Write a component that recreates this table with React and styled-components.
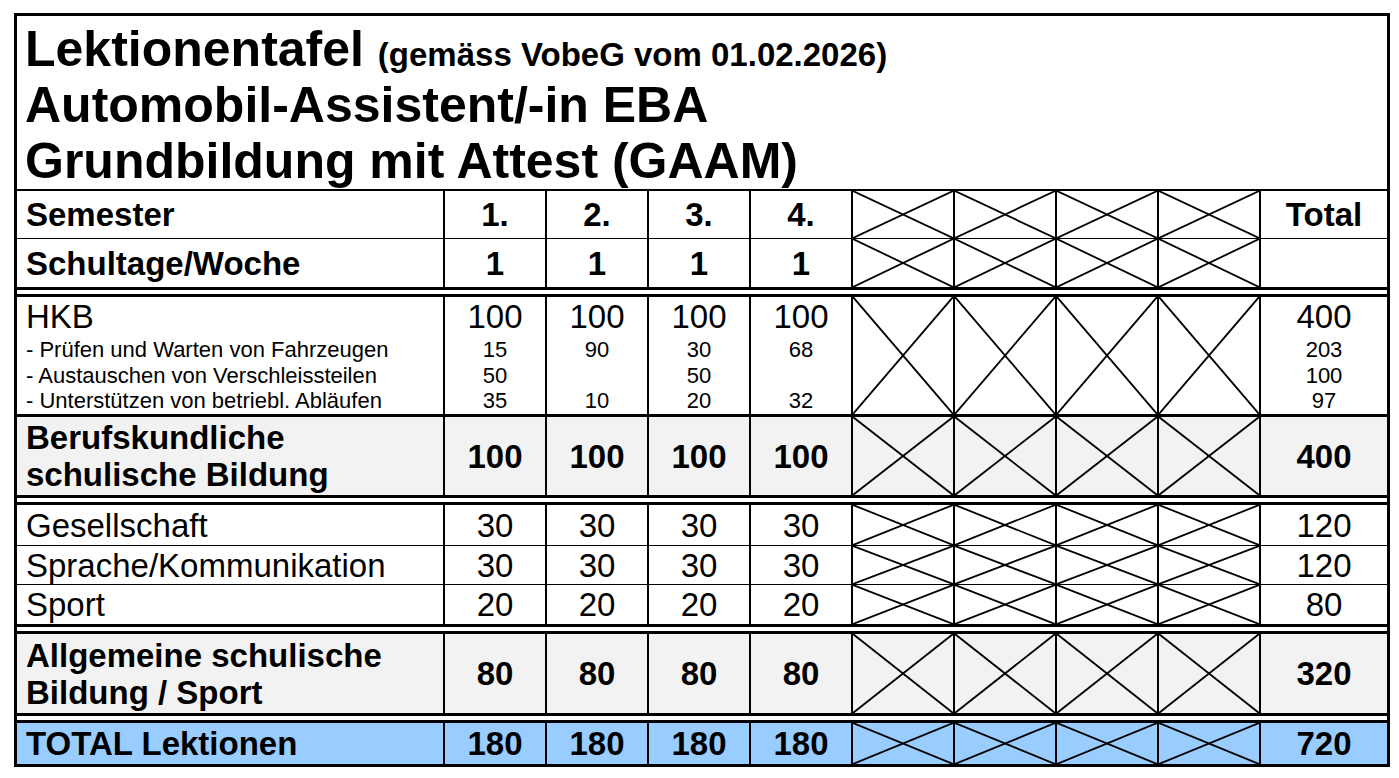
import React from "react";
import styled, { createGlobalStyle } from "styled-components";

const GlobalStyle = createGlobalStyle`
  html, body {
    margin: 0;
    padding: 0;
    background: #ffffff;
  }
  body {
    font-family: "Liberation Sans", Arial, sans-serif;
    color: #000;
  }
  * {
    box-sizing: border-box;
  }
`;

const Sheet = styled.div`
  margin: 13px 0 0 14px;
  width: 1376px;
  border: 3px solid #000;
`;

const TitleBlock = styled.div`
  padding: 5px 0 0 8px;
  border-bottom: 2px solid #000;
`;

const TitleLine = styled.div`
  height: 56px;
  font-size: 50px;
  font-weight: 700;
  line-height: 56px;
  white-space: nowrap;
`;

const TitleNote = styled.span`
  font-size: 33px;
  line-height: 1;
`;

const Row = styled.div`
  display: grid;
  grid-template-columns: 426px repeat(8, 102px) 128px;
  height: ${(p) => p.$h}px;
  background: ${(p) => p.$bg || "#ffffff"};
  border-bottom: ${(p) => p.$rule || 0}px solid #000;
`;

const DoubleRule = styled.div`
  height: 10px;
  border-top: 3px solid #000;
  border-bottom: 3px solid #000;
`;

const Cell = styled.div`
  position: relative;
  display: flex;
  flex-direction: column;
  justify-content: ${(p) => (p.$top ? "flex-start" : "center")};
  align-items: center;
  border-left: 2px solid #000;
  font-size: 33px;
  font-weight: ${(p) => (p.$bold ? 700 : 400)};
  line-height: 37px;
  white-space: nowrap;
`;

const LabelCell = styled(Cell)`
  align-items: flex-start;
  border-left: 0;
  padding-left: 9px;
`;

const MainLine = styled.div`
  line-height: 40px;
`;

const SubLine = styled.div`
  font-size: 22px;
  line-height: 25.5px;
`;

const CrossSvg = styled.svg`
  position: absolute;
  inset: 0;
  width: 100%;
  height: 100%;
  display: block;
`;

const Cross = () => (
  <CrossSvg viewBox="0 0 100 100" preserveAspectRatio="none">
    <line x1="0" y1="0" x2="100" y2="100" stroke="#000" strokeWidth="1.8" vectorEffect="non-scaling-stroke" />
    <line x1="100" y1="0" x2="0" y2="100" stroke="#000" strokeWidth="1.8" vectorEffect="non-scaling-stroke" />
  </CrossSvg>
);

const Crosses = () =>
  [0, 1, 2, 3].map((i) => (
    <Cell key={i}>
      <Cross />
    </Cell>
  ));

const SimpleRow = ({ label, values, total, bold, h, bg, rule }) => (
  <Row $h={h} $bg={bg} $rule={rule}>
    <LabelCell $bold={bold}>{label}</LabelCell>
    {values.map((v, i) => (
      <Cell key={i} $bold={bold}>
        {v}
      </Cell>
    ))}
    <Crosses />
    <Cell $bold={bold}>{total}</Cell>
  </Row>
);

const hkbSubs = [
  "- Prüfen und Warten von Fahrzeugen",
  "- Austauschen von Verschleissteilen",
  "- Unterstützen von betriebl. Abläufen",
];

const hkbCols = [
  { main: "100", subs: ["15", "50", "35"] },
  { main: "100", subs: ["90", "", "10"] },
  { main: "100", subs: ["30", "50", "20"] },
  { main: "100", subs: ["68", "", "32"] },
];

const hkbTotal = { main: "400", subs: ["203", "100", "97"] };

const NumberStack = ({ col }) => (
  <Cell $top>
    <MainLine>{col.main}</MainLine>
    {col.subs.map((s, i) => (
      <SubLine key={i}>{s || "\u00a0"}</SubLine>
    ))}
  </Cell>
);

const App = () => {
  return (
    <>
      <GlobalStyle />
      <Sheet>
        <TitleBlock>
          <TitleLine>
            Lektionentafel <TitleNote>(gemäss VobeG vom 01.02.2026)</TitleNote>
          </TitleLine>
          <TitleLine>Automobil-Assistent/-in EBA</TitleLine>
          <TitleLine>Grundbildung mit Attest (GAAM)</TitleLine>
        </TitleBlock>

        <SimpleRow label="Semester" values={["1.", "2.", "3.", "4."]} total="Total" bold h={48} rule={1} />
        <SimpleRow label="Schultage/Woche" values={["1", "1", "1", "1"]} total="" bold h={48} />
        <DoubleRule />

        <Row $h={120} $rule={3}>
          <LabelCell $top>
            <MainLine>HKB</MainLine>
            {hkbSubs.map((s) => (
              <SubLine key={s}>{s}</SubLine>
            ))}
          </LabelCell>
          {hkbCols.map((c, i) => (
            <NumberStack key={i} col={c} />
          ))}
          <Crosses />
          <NumberStack col={hkbTotal} />
        </Row>

        <SimpleRow
          label={
            <>
              <div>Berufskundliche</div>
              <div>schulische Bildung</div>
            </>
          }
          values={["100", "100", "100", "100"]}
          total="400"
          bold
          h={78}
          bg="#f2f2f2"
        />
        <DoubleRule />

        <SimpleRow label="Gesellschaft" values={["30", "30", "30", "30"]} total="120" h={41} rule={1} />
        <SimpleRow label="Sprache/Kommunikation" values={["30", "30", "30", "30"]} total="120" h={39} rule={1} />
        <SimpleRow label="Sport" values={["20", "20", "20", "20"]} total="80" h={39} />
        <DoubleRule />

        <SimpleRow
          label={
            <>
              <div>Allgemeine schulische</div>
              <div>Bildung / Sport</div>
            </>
          }
          values={["80", "80", "80", "80"]}
          total="320"
          bold
          h={79}
          bg="#f2f2f2"
        />
        <DoubleRule />

        <SimpleRow
          label="TOTAL Lektionen"
          values={["180", "180", "180", "180"]}
          total="720"
          bold
          h={41}
          bg="#99ccff"
        />
      </Sheet>
    </>
  );
};

export default App;
